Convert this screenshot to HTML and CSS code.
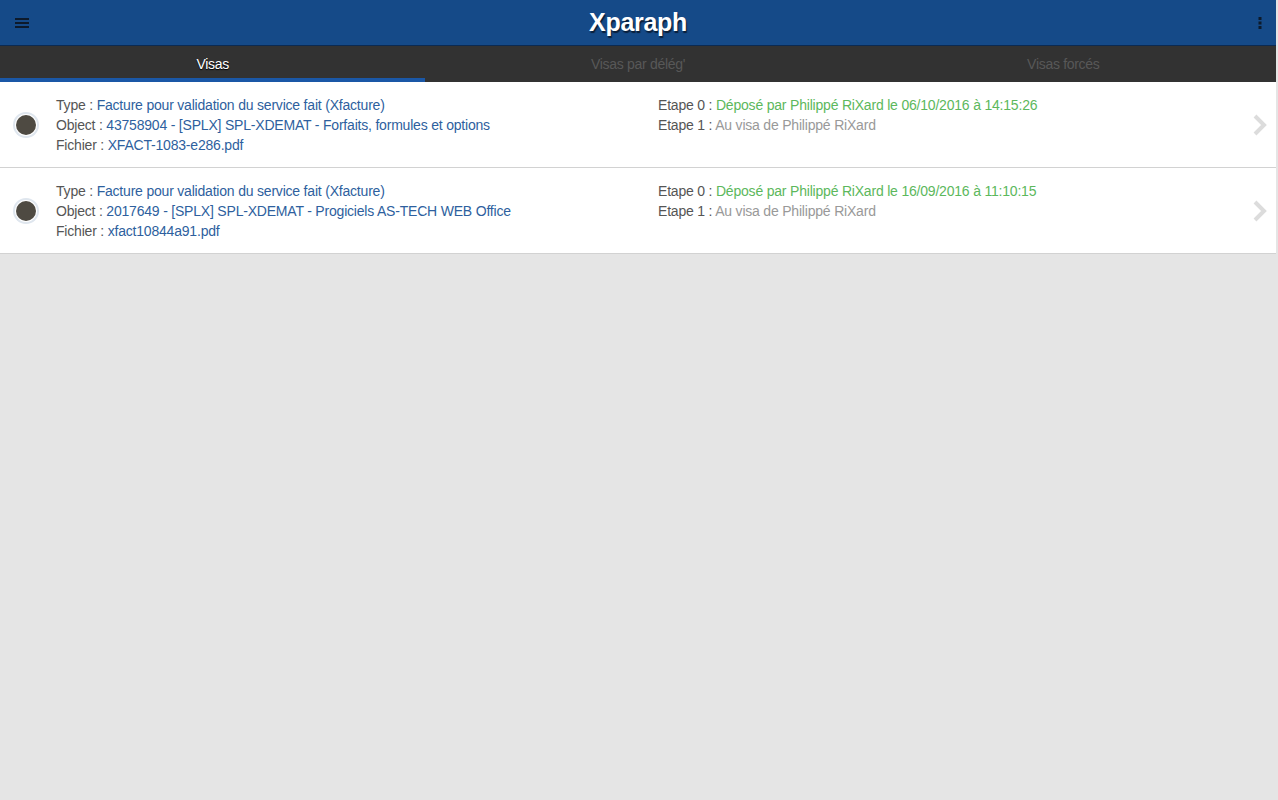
FILE: index.html
```html
<!DOCTYPE html>
<html lang="fr">
  <head>
    <meta charset="UTF-8" />
    <meta name="viewport" content="width=device-width, initial-scale=1.0" />
    <title>Xparaph</title>
    <link rel="stylesheet" href="styles.css">
  </head>
  <body>
    <div class="app">
      <header class="topbar">
        <button type="button" class="icon-btn menu-btn" aria-label="Menu">
          <svg width="14" height="12" viewBox="0 0 14 12">
            <rect x="0" y="1" width="14" height="2" fill="#0d1a2b" />
            <rect x="0" y="5" width="14" height="2" fill="#0d1a2b" />
            <rect x="0" y="9" width="14" height="2" fill="#0d1a2b" />
          </svg>
        </button>
        <h1 class="title">Xparaph</h1>
        <button type="button" class="icon-btn more-btn" aria-label="Options">
          <svg width="4" height="14" viewBox="0 0 4 14">
            <rect x="0.5" y="1" width="3" height="3" fill="#0d1a2b" />
            <rect x="0.5" y="5.5" width="3" height="3" fill="#0d1a2b" />
            <rect x="0.5" y="10" width="3" height="3" fill="#0d1a2b" />
          </svg>
        </button>
      </header>

      <nav class="tabs">
        <div class="tab active">Visas</div>
        <div class="tab">Visas par délég'</div>
        <div class="tab">Visas forcés</div>
      </nav>

      <ul class="list">
        <li class="item">
          <span class="radio"><span class="dot"></span></span>
          <div class="col col-doc">
            <div class="line"><span class="label">Type : </span><span class="val">Facture pour validation du service fait (Xfacture)</span></div>
            <div class="line"><span class="label">Object : </span><span class="val">43758904 - [SPLX] SPL-XDEMAT - Forfaits, formules et options</span></div>
            <div class="line"><span class="label">Fichier : </span><span class="val">XFACT-1083-e286.pdf</span></div>
          </div>
          <div class="col col-steps">
            <div class="line"><span class="label">Etape 0 : </span><span class="done">Déposé par Philippé RiXard le 06/10/2016 à 14:15:26</span></div>
            <div class="line"><span class="label">Etape 1 : </span><span class="todo">Au visa de Philippé RiXard</span></div>
          </div>
          <svg class="chevron" width="16" height="24" viewBox="0 0 16 24">
            <path d="M3 3 L12 12 L3 21" fill="none" stroke="#dcdcdc" stroke-width="4" />
          </svg>
        </li>
        <li class="item">
          <span class="radio"><span class="dot"></span></span>
          <div class="col col-doc">
            <div class="line"><span class="label">Type : </span><span class="val">Facture pour validation du service fait (Xfacture)</span></div>
            <div class="line"><span class="label">Object : </span><span class="val">2017649 - [SPLX] SPL-XDEMAT - Progiciels AS-TECH WEB Office</span></div>
            <div class="line"><span class="label">Fichier : </span><span class="val">xfact10844a91.pdf</span></div>
          </div>
          <div class="col col-steps">
            <div class="line"><span class="label">Etape 0 : </span><span class="done">Déposé par Philippé RiXard le 16/09/2016 à 11:10:15</span></div>
            <div class="line"><span class="label">Etape 1 : </span><span class="todo">Au visa de Philippé RiXard</span></div>
          </div>
          <svg class="chevron" width="16" height="24" viewBox="0 0 16 24">
            <path d="M3 3 L12 12 L3 21" fill="none" stroke="#dcdcdc" stroke-width="4" />
          </svg>
        </li>
      </ul>
    </div>
  </body>
</html>
```

FILE: styles.css
```css
html,
body {
  margin: 0;
  height: 100%;
}
body {
  background-color: #e5e5e5;
  font-family: "Liberation Sans", Arial, sans-serif;
  font-size: 14px;
  color: #555555;
}
.app {
  width: calc(100% - 2px);
  min-height: 100%;
  background-color: #e5e5e5;
}
.topbar {
  height: 45px;
  background-color: #154a88;
  border-bottom: 1px solid #0b2a52;
  display: grid;
  grid-template-columns: 1fr auto 1fr;
  align-items: center;
}
.icon-btn {
  width: 44px;
  height: 45px;
  padding: 0;
  border: none;
  background: none;
  display: flex;
  align-items: center;
  justify-content: center;
}
.menu-btn {
  justify-self: start;
}
.menu-btn svg {
  margin-right: 1px;
}
.more-btn {
  justify-self: end;
  width: 33px;
}
.title {
  margin: 0;
  font-size: 25px;
  font-weight: bold;
  color: #ffffff;
  text-shadow: 1px 2px 1px #0a1e38;
  letter-spacing: -0.3px;
}
.tabs {
  display: flex;
  height: 36px;
  background-color: #323232;
}
.tab {
  flex: 1;
  text-align: center;
  line-height: 36px;
  color: #585858;
  font-size: 14px;
  letter-spacing: -0.3px;
}
.tab.active {
  color: #ffffff;
  box-shadow: inset 0 -4px 0 #1a57a6;
  text-shadow: 0 1px 1px #000000;
}
.list {
  list-style: none;
  margin: 0;
  padding: 0;
}
.item {
  display: flex;
  align-items: center;
  height: 86px;
  background-color: #ffffff;
  border-bottom: 1px solid #d2d2d2;
  box-sizing: border-box;
}
.radio {
  width: 26px;
  height: 26px;
  border-radius: 50%;
  background-color: #dfe6ee;
  margin-left: 13px;
  margin-right: 17px;
  display: flex;
  align-items: center;
  justify-content: center;
  flex-shrink: 0;
}
.dot {
  width: 20px;
  height: 20px;
  border-radius: 50%;
  background-color: #4e4a42;
  box-shadow: 0 0 0 1px #ffffff;
}
.col {
  align-self: flex-start;
  padding-top: 13px;
  letter-spacing: -0.2px;
}
.col-doc {
  width: 602px;
}
.col-steps {
  flex: 1;
}
.line {
  line-height: 20px;
  white-space: nowrap;
}
.label {
  color: #555555;
}
.val {
  color: #2e5f9e;
}
.done {
  color: #5cb85c;
}
.todo {
  color: #999999;
}
.chevron {
  margin-right: 8px;
  flex-shrink: 0;
}
```
